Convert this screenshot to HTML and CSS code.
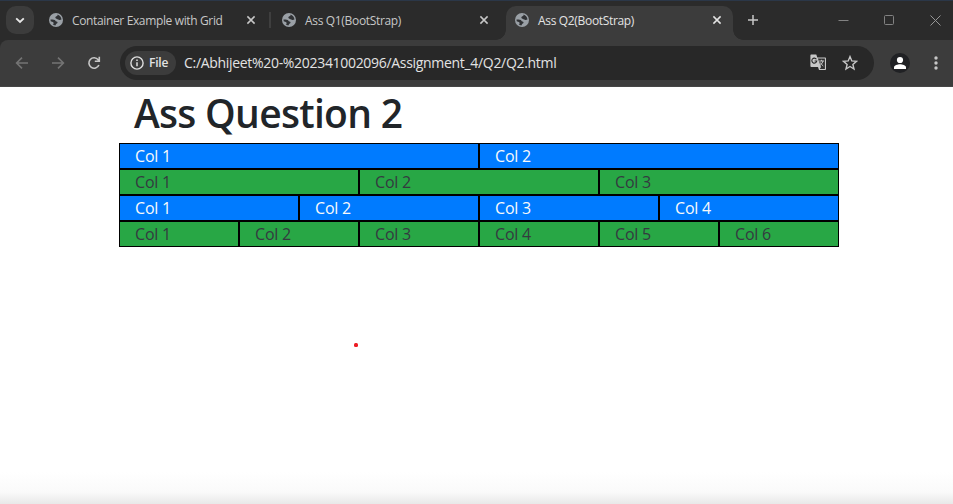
FILE: index.html
```
<!DOCTYPE html>
<html lang="en">
<head>
<meta charset="utf-8">
<title>Ass Q2(BootStrap)</title>
<link rel="stylesheet" href="styles.css">
</head>
<body>
<svg class="defs" width="0" height="0">
  <symbol id="globe" viewBox="0 0 14 14">
    <circle cx="7" cy="7" r="7" fill="#9aa0a6"/>
    <path d="M8.4 1.5C9 2.4 8.3 3 7.4 3.3C6.2 3.8 6 5 7 5.6C8 6.2 9 6.3 9.8 6.7C10.6 7.1 11.6 6.9 12.5 6.4C12.2 3.9 10.6 2.1 8.4 1.5Z" fill="#303235"/>
    <path d="M1.5 6.6C3 6.3 4.7 6.2 5.8 7C6.7 7.6 6.4 8.4 7.4 8.6C8.7 8.9 8.9 10 7.9 10.4C7 10.7 6.9 11.5 6.3 12.5C5.2 12.3 4.4 11.9 3.7 11.3C4.7 10.9 4.9 10 4.4 9.4C3.7 8.6 2.4 8.8 1.7 8.3Z" fill="#303235"/>
  </symbol>
  <symbol id="close" viewBox="0 0 10 10"><path d="M1.4 1.4L8.6 8.6M8.6 1.4L1.4 8.6" stroke="currentColor" stroke-width="1.5"/></symbol>
</svg>
<header class="browser">
  <div class="tabstrip">
    <button class="search"><svg width="10" height="7" viewBox="0 0 10 7"><path d="M1.2 1.4L5 5L8.8 1.4" fill="none" stroke="#e8e8e8" stroke-width="1.9"/></svg></button>
    <div class="tab first"><svg class="fav"><use href="#globe"/></svg><span class="t1">Container Example with Grid</span><svg class="x"><use href="#close"/></svg></div>
    <div class="tab"><svg class="fav"><use href="#globe"/></svg><span class="t2">Ass Q1(BootStrap)</span><svg class="x"><use href="#close"/></svg></div>
    <div class="tab active"><svg class="fav"><use href="#globe"/></svg><span class="t2">Ass Q2(BootStrap)</span><svg class="x"><use href="#close"/></svg></div>
    <svg class="plus" width="12" height="12"><path d="M6 1V11M1 6H11" stroke="#c7c7c7" stroke-width="1.5"/></svg>
    <div class="window">
      <svg width="11" height="11"><path d="M.5 5.5H10.5" stroke="#828282"/></svg>
      <svg width="11" height="11"><rect x=".5" y=".5" width="9" height="9" rx="1" fill="none" stroke="#828282"/></svg>
      <svg width="11" height="11"><path d="M.5 .5L10.5 10.5M10.5 .5L.5 10.5" stroke="#969696"/></svg>
    </div>
  </div>
  <div class="toolbar">
    <svg class="nav dim" width="14" height="14"><path d="M13 7H2M7 1.6L1.6 7L7 12.4"/></svg>
    <svg class="nav dim" width="14" height="14"><path d="M1 7H12M7 1.6L12.4 7L7 12.4"/></svg>
    <svg class="nav" width="14" height="14"><path d="M11.9 9A5.2 5.2 0 1 1 11.2 3.8L12.2 5.2M12.3 .8V5.3H7.8"/></svg>
    <div class="omnibox">
      <div class="chip"><svg width="14" height="14"><circle cx="7" cy="7" r="6.1" fill="none" stroke="#dedede" stroke-width="1.4"/><path d="M7 6.2V10.3M7 3.6V5" stroke="#dedede" stroke-width="1.5"/></svg><span>File</span></div>
      <span class="url">C:/Abhijeet%20-%202341002096/Assignment_4/Q2/Q2.html</span>
      <svg class="translate" width="17" height="17" viewBox="0 0 17 17"><path d="M1.2 .5H6.3L7.3 3.5H15.2Q16 3.5 16 4.3V15.2Q16 16 15.2 16H9L8 13H1.3Q.4 13 .4 12V1.4Q.4.5 1.2.5Z" fill="#c7c7c7"/><path d="M7.9 4.5H14.9V15H9.8L11 13Z" fill="#303030"/><path d="M6.4 5.2A2.5 2.5 0 1 0 6.8 7H4.6" fill="none" stroke="#282828" stroke-width="1.1"/><path d="M9.2 7H14M11.6 5.8V7M13 7Q12.3 10 9.9 11.5M10.3 8.5Q11.3 10.5 13.3 12" fill="none" stroke="#c7c7c7"/></svg>
      <svg class="star" width="16" height="16" viewBox="0 0 16 16"><path d="M8 1.6L9.8 5.9L14.5 6.3L10.9 9.4L12 14L8 11.5L4 14L5.1 9.4L1.5 6.3L6.2 5.9Z" fill="none" stroke="#c7c7c7" stroke-width="1.4"/></svg>
    </div>
    <svg class="avatar" width="20" height="20"><circle cx="10" cy="10" r="10" fill="#202124"/><circle cx="10" cy="7" r="3.1" fill="#fff"/><path d="M4 16V14.2C4 12.2 7.7 11.2 10 11.2S16 12.2 16 14.2V16Z" fill="#fff"/></svg>
    <svg class="dots" width="4" height="14"><g fill="#c7c7c7"><circle cx="2" cy="2" r="1.7"/><circle cx="2" cy="7" r="1.7"/><circle cx="2" cy="12" r="1.7"/></g></svg>
  </div>
</header>
<main class="page">
  <div class="container">
    <h1><span>Ass Question 2</span></h1>
    <div class="row blue"><div>Col 1</div><div>Col 2</div></div>
    <div class="row green"><div>Col 1</div><div>Col 2</div><div>Col 3</div></div>
    <div class="row blue"><div>Col 1</div><div>Col 2</div><div>Col 3</div><div>Col 4</div></div>
    <div class="row green"><div>Col 1</div><div>Col 2</div><div>Col 3</div><div>Col 4</div><div>Col 5</div><div>Col 6</div></div>
  </div>
  <i class="pointer"></i>
</main>
</body>
</html>
```
FILE: styles.css
```
* { box-sizing: border-box; }
body { margin: 0; height: 504px; overflow: hidden; display: flex; flex-direction: column; background: #fff; font-family: "Open Sans", "Noto Sans", sans-serif; }
svg { display: block; flex: none; }
.defs { position: absolute; }
.browser { flex: none; height: 87px; background: #2b2b2b; border-top: 1px solid #2b3748; }
.tabstrip { height: 39px; display: flex; align-items: flex-start; padding: 5px 0 0 6px; }
.search { width: 28px; height: 28px; border: 0; border-radius: 10px; background: #3c3c3c; padding: 0; display: flex; align-items: center; justify-content: center; }
.tab { position: relative; width: 233px; height: 28px; padding: 0 17px 0 9px; display: flex; align-items: center; color: #c7c7c7; font-size: 12px; white-space: nowrap; }
.first { margin-left: 6px; }
.first::after { content: ""; position: absolute; left: 229px; top: 6px; width: 2px; height: 16px; background: #3f3f3f; }
.tab span { margin-left: 9px; }
.t1 { letter-spacing: -.36px; }
.t2 { letter-spacing: -.33px; }
.x { width: 10px; height: 10px; margin-left: auto; color: #c7c7c7; }
.fav { width: 14px; height: 14px; }
.active { width: 227px; height: 34px; padding: 0 11px 6px 9px; background: #3c3c3c; border-radius: 10px 10px 0 0; color: #e3e3e3; }
.active .x { color: #e3e3e3; }
.active::before, .active::after { content: ""; position: absolute; bottom: 0; width: 10px; height: 10px; }
.active::before { left: -10px; background: radial-gradient(circle at 0 0, transparent 9.5px, #3c3c3c 10px); }
.active::after { right: -10px; background: radial-gradient(circle at 100% 0, transparent 9.5px, #3c3c3c 10px); }
.plus { margin: 8px 0 0 14px; }
.window { margin: 9px 12px 0 auto; display: flex; gap: 35px; }
.toolbar { height: 47px; background: #3c3c3c; border-radius: 8px 0 0 0; display: flex; align-items: center; padding: 0 15px 1px 15px; border-bottom: 1px solid #464646; }
.nav { margin-right: 22px; fill: none; stroke: #c7c7c7; stroke-width: 1.6; }
.dim { stroke: #747474; }
.toolbar .omnibox { margin-left: -3px; width: 754px; height: 34px; border-radius: 17px; background: #282828; display: flex; align-items: center; padding: 0 16px 0 5px; }
.chip { width: 51px; height: 24px; border-radius: 12px; background: #3c3c3c; display: flex; align-items: center; padding-left: 5px; gap: 5px; color: #e3e3e3; font-size: 12px; font-weight: 600; letter-spacing: -.2px; }
.url { margin-left: 8px; color: #e3e3e3; font-size: 14px; letter-spacing: -.31px; white-space: nowrap; }
.translate { margin-left: auto; }
.star { margin-left: 15px; }
.avatar { margin-left: 16px; }
.dots { margin-left: 24px; }
.page { position: relative; flex: 1; background: linear-gradient(#fff 385px, #fafafa 405px, #e8e8e8 417px); }
.container { width: 720px; margin-left: 119px; color: #212529; }
h1 { margin: 0 0 8px; padding-left: 15px; font-size: 39px; line-height: 51px; height: 48px; font-weight: 600; letter-spacing: -.7px; }
.row { display: flex; font-size: 16px; line-height: 24px; letter-spacing: -.2px; }
.row div { flex: 1; height: 26px; border: 1px solid #000; padding-left: 15px; }
.blue { color: #f8f9fa; }
.blue div { background: #007bff; }
.green { color: #343a40; }
.green div { background: #28a745; }
.pointer { position: absolute; left: 354px; top: 256px; width: 4px; height: 4px; border-radius: 1.5px; background: #ed1c24; }
```
